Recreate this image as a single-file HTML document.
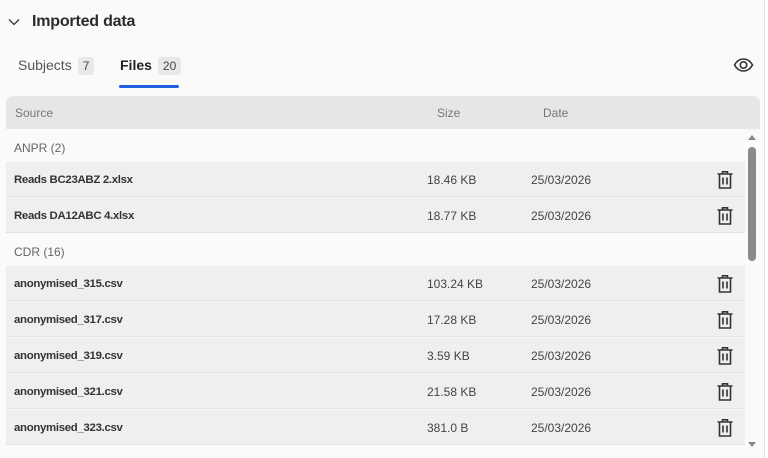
<!DOCTYPE html>
<html><head><style>
*{margin:0;padding:0;box-sizing:border-box}
body{width:768px;height:458px;background:#fff;font-family:"Liberation Sans",sans-serif;position:relative;overflow:hidden;color:#242424}
.panel{position:absolute;left:0;top:0;width:765px;height:458px;background:#fafafa;border-right:1px solid #e4e4e4}
.a{position:absolute;white-space:nowrap}
.row{position:absolute;left:6px;width:739px;height:35px;background:#efefef;border-bottom:1px solid #e2e2e2}
.row span{position:absolute;top:11px;font-size:12px}
.row span.fn{left:8px;top:12px;font-weight:bold;color:#333;font-size:11.4px;letter-spacing:-0.3px}
.sz{left:421px;color:#444}
.dt{left:525px;color:#444}
.row svg{position:absolute;left:710px;top:8px}
.grp{position:absolute;left:14px;font-size:12px;color:#666}
.badge{display:inline-block;background:#e8e8e8;border-radius:3px;padding:2px 5px;font-size:12px;color:#444;margin-left:6px}
</style></head><body>
<div class="panel">
<svg class="a" style="left:8px;top:17px" width="12" height="10" viewBox="0 0 12 10"><path d="M1 2.5l5 5 5-5" fill="none" stroke="#333" stroke-width="1.3"/></svg>
<div class="a" style="left:32px;top:13px;font-size:16px;font-weight:bold;color:#2b2b2b;letter-spacing:-0.2px">Imported data</div>
<div class="a" style="left:18px;top:57px;font-size:14px;color:#555">Subjects<span class="badge">7</span></div>
<div class="a" style="left:120px;top:57px;font-size:14px;font-weight:bold;color:#222">Files<span class="badge" style="font-weight:normal">20</span></div>
<div class="a" style="left:119px;top:85px;width:60px;height:3px;background:#1f5fe0;border-radius:2px"></div>
<svg class="a" style="left:733px;top:57px" width="21" height="16" viewBox="0 0 21 16"><path d="M1.5 8C4 3.5 7 2 10.5 2S17 3.5 19.5 8C17 12.5 14 14 10.5 14S4 12.5 1.5 8z" fill="none" stroke="#333" stroke-width="1.6"/><circle cx="10.5" cy="8" r="3.2" fill="none" stroke="#333" stroke-width="1.6"/></svg>
<div class="a" style="left:6px;top:96px;width:754px;height:33px;background:#e6e6e6;border-radius:7px 7px 0 0"></div>
<div class="a" style="left:15px;top:106px;font-size:12px;color:#777">Source</div>
<div class="a" style="left:437px;top:106px;font-size:12px;color:#777">Size</div>
<div class="a" style="left:543px;top:106px;font-size:12px;color:#777">Date</div>
<div class="grp" style="top:141px">ANPR (2)</div>
<div class="row" style="top:162px"><span class="fn">Reads BC23ABZ 2.xlsx</span><span class="sz">18.46 KB</span><span class="dt">25/03/2026</span>TRASH</div>
<div class="row" style="top:198px"><span class="fn">Reads DA12ABC 4.xlsx</span><span class="sz">18.77 KB</span><span class="dt">25/03/2026</span>TRASH</div>
<div class="grp" style="top:245px">CDR (16)</div>
<div class="row" style="top:266px"><span class="fn">anonymised_315.csv</span><span class="sz">103.24 KB</span><span class="dt">25/03/2026</span>TRASH</div>
<div class="row" style="top:302px"><span class="fn">anonymised_317.csv</span><span class="sz">17.28 KB</span><span class="dt">25/03/2026</span>TRASH</div>
<div class="row" style="top:338px"><span class="fn">anonymised_319.csv</span><span class="sz">3.59 KB</span><span class="dt">25/03/2026</span>TRASH</div>
<div class="row" style="top:374px"><span class="fn">anonymised_321.csv</span><span class="sz">21.58 KB</span><span class="dt">25/03/2026</span>TRASH</div>
<div class="row" style="top:410px"><span class="fn">anonymised_323.csv</span><span class="sz">381.0 B</span><span class="dt">25/03/2026</span>TRASH</div>
<div class="a" style="left:746px;top:129px;width:12px;height:323px;background:#fafafa"></div>
<svg class="a" style="left:747px;top:133px" width="10" height="8"><path d="M1 7L5 2 9 7z" fill="#888"/></svg>
<div class="a" style="left:748px;top:147px;width:8px;height:114px;background:#8a8a8a;border-radius:4px"></div>
<svg class="a" style="left:747px;top:441px" width="10" height="8"><path d="M1 1L5 6 9 1z" fill="#888"/></svg>
</div>
<script>
var t='<svg width="18" height="20" viewBox="0 0 18 20"><path d="M1.5 4h15M6.5 4V1.8h5V4M3.5 4v14h11V4M7 7.5v7M11 7.5v7" fill="none" stroke="#333" stroke-width="1.6"/></svg>';
document.querySelectorAll('.row').forEach(function(r){r.innerHTML=r.innerHTML.replace('TRASH',t)});
</script>
</body></html>
